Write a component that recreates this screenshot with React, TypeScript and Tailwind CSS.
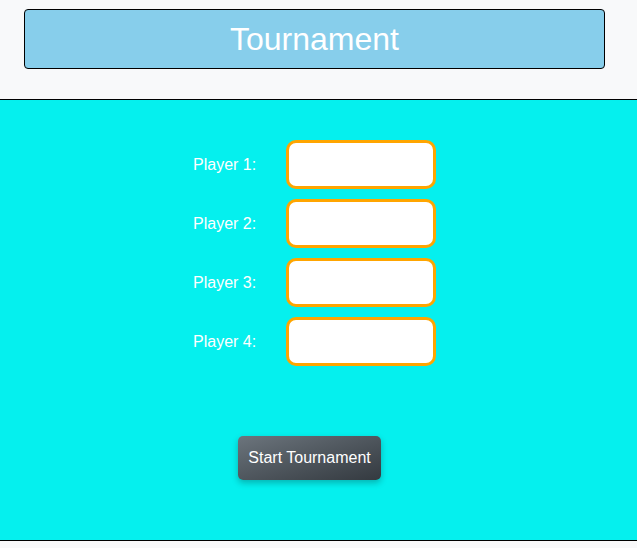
export default function App() {
  const players = [1, 2, 3, 4];

  return (
    <div className="min-h-[548px] bg-[#f8f9fa] font-['Liberation_Sans',Arial,sans-serif]">
      {/* Header */}
      <div className="px-[24px] pt-[9px] pb-[30px]">
        <div className="flex h-[60px] w-[581px] items-center justify-center rounded-[4px] border border-black bg-[#87ceeb]">
          <h1 className="text-[32px] leading-none text-white">Tournament</h1>
        </div>
      </div>

      {/* Form */}
      <div className="border-y border-black bg-[#05f0ee] pt-[40px] pb-[60px]">
        <div className="flex flex-col items-center gap-[10px] pr-[8px]">
          {players.map((n) => (
            <div key={n} className="flex items-center">
              <label className="w-[93px] text-[16px] text-white">Player {n}:</label>
              <input
                type="text"
                className="h-[49px] w-[150px] rounded-[10px] border-[3px] border-[#ffa500] bg-white px-2 outline-none"
              />
            </div>
          ))}
        </div>

        <div className="mt-[70px] flex justify-center pr-[18px]">
          <button className="h-[44px] w-[143px] rounded-[5px] bg-gradient-to-br from-[#6c757d] to-[#343a40] text-[16px] text-white shadow-[0_3px_6px_rgba(0,0,0,0.25)]">
            Start Tournament
          </button>
        </div>
      </div>
    </div>
  );
}
